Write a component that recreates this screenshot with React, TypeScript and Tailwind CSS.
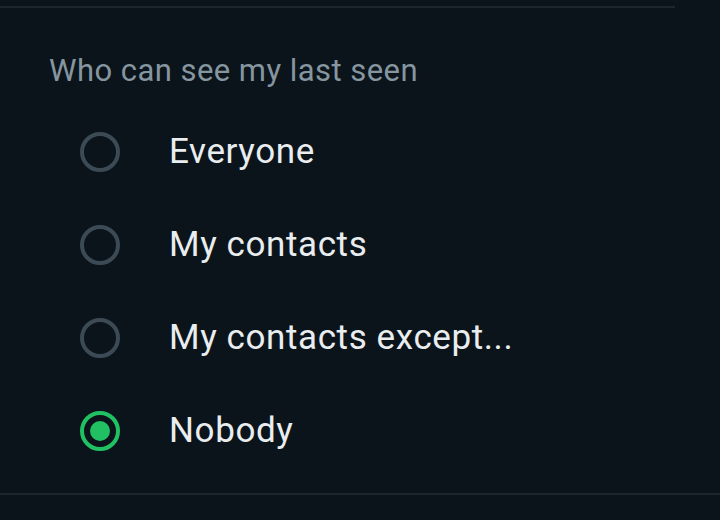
import React, { useState } from "react";

const options = ["Everyone", "My contacts", "My contacts except...", "Nobody"];

export default function App() {
  const [selected, setSelected] = useState("Nobody");

  return (
    <div className="w-[720px] h-[520px] bg-[#0b141a] overflow-hidden font-['Roboto',sans-serif]">
      <div className="pt-[6px]">
        <div className="h-[2px] w-[675px] bg-[#1c262c]" />
      </div>

      <div className="mt-[45px] h-[36px] pl-[49px] text-[31px] tracking-[0.45px] leading-[36px] text-[#8696a0]">
        Who can see my last seen
      </div>

      <div className="mt-[16px] flex flex-col">
        {options.map((opt) => {
          const active = opt === selected;
          return (
            <button
              key={opt}
              onClick={() => setSelected(opt)}
              className="h-[93px] flex items-center pl-[80px] gap-[49px] text-left"
            >
              <span
                className={
                  active
                    ? "w-10 h-10 rounded-full border-[4px] border-[#21c063] flex items-center justify-center"
                    : "w-10 h-10 rounded-full border-[4px] border-[#3b4a54]"
                }
              >
                {active && <span className="w-5 h-5 rounded-full bg-[#21c063]" />}
              </span>
              <span className="text-[35px] tracking-[0.6px] text-[#e9edef] leading-none">{opt}</span>
            </button>
          );
        })}
      </div>

      <div className="mt-[16px] h-[2px] w-full bg-[#1c262c]" />
    </div>
  );
}
